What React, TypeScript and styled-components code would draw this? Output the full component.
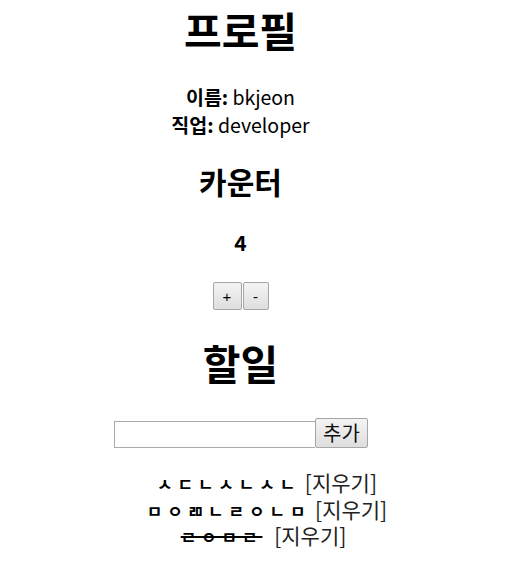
import React, { useState } from "react";
import styled, { createGlobalStyle } from "styled-components";

const Global = createGlobalStyle`
  html, body { margin: 0; padding: 0; background: #fff; }
  body {
    font-family: "Noto Sans CJK KR", "Noto Sans", sans-serif;
    color: #000;
  }
`;

const Page = styled.div`
  width: 461px;
  margin: 0 0 0 10px;
  text-align: center;
`;

const Title = styled.h1`
  margin: 0;
  font-size: 41px;
  line-height: 58px;
  font-weight: 700;
`;

const SubTitle = styled.h2`
  margin: 0;
  font-size: 30px;
  line-height: 40px;
  font-weight: 700;
`;

const Info = styled.div`
  margin-top: 25px;
  font-size: 19.5px;
  line-height: 28px;
`;

const Label = styled.b`
  font-weight: 700;
`;

const Counter = styled.section`
  margin-top: 22px;
`;

const Count = styled.div`
  margin-top: 26px;
  font-size: 21px;
  line-height: 30px;
  font-weight: 700;
`;

const ButtonRow = styled.div`
  margin-top: 25px;
  display: flex;
  justify-content: center;
  gap: 1px;
`;

const SmallButton = styled.button<{ $w: number }>`
  width: ${(p) => p.$w}px;
  height: 28px;
  padding: 0;
  border: 1px solid #a6a6a6;
  border-radius: 2px;
  background: linear-gradient(#f4f4f4, #dedede);
  font-family: "Liberation Sans", Arial, sans-serif;
  font-size: 15px;
  color: #000;
`;

const Todo = styled.section`
  margin-top: 26px;
`;

const TodoTitle = styled.h1`
  margin: 0;
  font-size: 41px;
  line-height: 52px;
  font-weight: 700;
`;

const Form = styled.div`
  margin-top: 30px;
  display: flex;
  justify-content: center;
  align-items: flex-end;
  padding-left: 1px;
`;

const Input = styled.input`
  box-sizing: border-box;
  width: 201px;
  height: 27px;
  border: 1px solid #a9a9a9;
  border-right: none;
  margin: 0;
  padding: 0 3px;
  font-size: 18px;
`;

const AddButton = styled.button`
  box-sizing: border-box;
  width: 53px;
  height: 30px;
  padding: 0;
  margin: 0;
  border: 1px solid #a6a6a6;
  border-radius: 2px;
  background: linear-gradient(#f4f4f4, #dedede);
  font-family: "Noto Sans CJK KR", sans-serif;
  font-size: 20px;
  line-height: 26px;
  color: #111;
`;

const List = styled.ul`
  list-style: none;
  margin: 21px 0 0;
  padding: 0 0 0 40px;
  font-size: 21px;
`;

const Item = styled.li<{ $shift: number }>`
  height: 26.5px;
  line-height: 26.5px;
  padding-left: ${(p) => p.$shift}px;
`;

const Jamo = styled.span<{ $done: boolean }>`
  display: inline-block;
  font-weight: 700;
  font-size: 17px;
  line-height: 26.5px;
  letter-spacing: 4.8px;
  margin-right: ${(p) => (p.$done ? 7 : 0)}px;
  text-decoration: ${(p) => (p.$done ? "line-through" : "none")};
  text-decoration-thickness: 2px;
`;

const Remove = styled.span`
  display: inline-block;
  line-height: 26.5px;
  font-weight: 400;
  color: #222;
`;

export default function App() {
  const [count, setCount] = useState(4);
  const [todos] = useState([
    { id: 1, text: "ㅅㄷㄴㅅㄴㅅㄴ", done: false, shift: 13 },
    { id: 2, text: "ㅁㅇㄻㄴㄹㅇㄴㅁ", done: false, shift: 13 },
    { id: 3, text: "ㄹㅇㅁㄹ", done: true, shift: 6 },
  ]);
  return (
    <Page>
      <Global />
      <Title>프로필</Title>
      <Info>
        <div>
          <Label>이름:</Label> bkjeon
        </div>
        <div>
          <Label>직업:</Label> developer
        </div>
      </Info>
      <Counter>
        <SubTitle>카운터</SubTitle>
        <Count>{count}</Count>
        <ButtonRow>
          <SmallButton $w={29} onClick={() => setCount(count + 1)}>+</SmallButton>
          <SmallButton $w={26} onClick={() => setCount(count - 1)}>-</SmallButton>
        </ButtonRow>
      </Counter>
      <Todo>
        <TodoTitle>할일</TodoTitle>
        <Form>
          <Input />
          <AddButton>추가</AddButton>
        </Form>
        <List>
          {todos.map((t) => (
            <Item key={t.id} $shift={t.shift}>
              <Jamo $done={t.done}>{t.text}</Jamo> <Remove>[지우기]</Remove>
            </Item>
          ))}
        </List>
      </Todo>
    </Page>
  );
}
